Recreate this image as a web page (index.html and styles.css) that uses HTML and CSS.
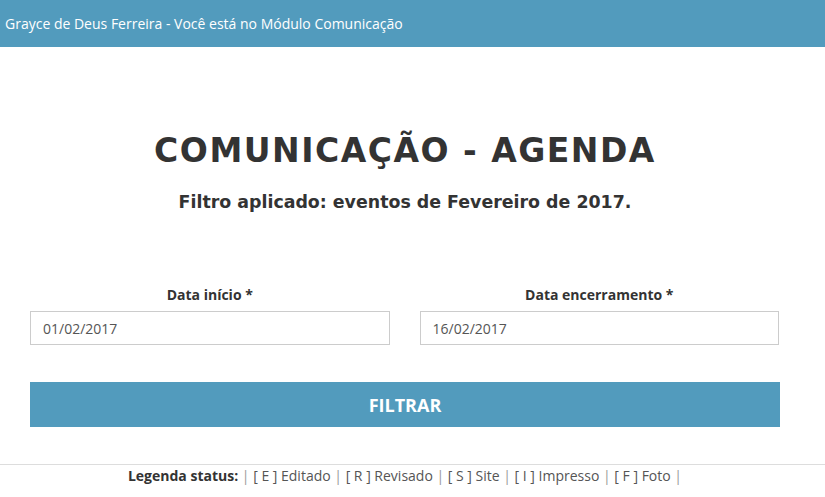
FILE: index.html
```html
<!DOCTYPE html>
<html lang="pt-BR">
<head>
<meta charset="utf-8">
<title>Comunicação - Agenda</title>
<link rel="stylesheet" href="styles.css">
</head>
<body>
<header class="topbar">Grayce de Deus Ferreira - Você está no Módulo Comunicação</header>
<main class="container">
  <h1 class="title">COMUNICAÇÃO - AGENDA</h1>
  <h2 class="subtitle">Filtro aplicado: eventos de Fevereiro de 2017.</h2>
  <form class="filter">
    <div class="fields">
      <div class="field">
        <label class="label">Data início *</label>
        <input class="input" type="text" value="01/02/2017">
      </div>
      <div class="field">
        <label class="label">Data encerramento *</label>
        <input class="input" type="text" value="16/02/2017">
      </div>
    </div>
    <button class="btn" type="button">FILTRAR</button>
  </form>
</main>
<footer class="legend">
  <strong>Legenda status:</strong> <span class="pipe">|</span> [ E ] Editado <span class="pipe">|</span> [ R ] Revisado <span class="pipe">|</span> [ S ] Site <span class="pipe">|</span> [ I ] Impresso <span class="pipe">|</span> [ F ] Foto <span class="pipe">|</span>
</footer>
</body>
</html>
```
FILE: styles.css
```css
* { box-sizing: border-box; }
body {
  margin: 0;
  font-family: "Open Sans", "Liberation Sans", sans-serif;
  font-size: 14px;
  color: #333;
  background: #fff;
}
.topbar {
  height: 47px;
  background: #529bbd;
  color: #fff;
  display: flex;
  align-items: center;
  padding-left: 5px;
  font-size: 14px;
}
.container {
  width: 750px;
  margin-left: 30px;
}
.title {
  margin: 84px 0 0;
  font-family: "DejaVu Sans", sans-serif;
  font-weight: 700;
  font-size: 33px;
  line-height: 40px;
  letter-spacing: 1.5px;
  text-align: center;
  color: #333;
}
.subtitle {
  margin: 18px 0 0;
  font-family: "DejaVu Sans", sans-serif;
  font-weight: 700;
  font-size: 17.4px;
  line-height: 26px;
  text-align: center;
  color: #333;
}
.filter {
  margin-top: 70px;
}
.fields {
  display: flex;
  gap: 30px;
  width: 749px;
}
.field {
  flex: 1;
  display: flex;
  flex-direction: column;
}
.label {
  display: block;
  text-align: center;
  font-weight: 700;
  font-size: 14px;
  line-height: 20px;
  margin-bottom: 6px;
  color: #333;
}
.input {
  height: 34px;
  border: 1px solid #ccc;
  padding: 0 12px;
  font-family: "Open Sans", sans-serif;
  font-size: 14px;
  color: #555;
  outline: none;
}
.btn {
  display: block;
  width: 100%;
  height: 45px;
  margin-top: 37px;
  border: 0;
  background: #529bbd;
  color: #fff;
  font-family: "Open Sans", sans-serif;
  font-weight: 700;
  font-size: 18px;
}
.legend {
  margin-top: 37px;
  border-top: 1px solid #ddd;
  padding-right: 15px;
  text-align: center;
  line-height: 22px;
  font-size: 14px;
  color: #555;
}
.legend strong { color: #333; }
.pipe { color: #999; }
```
